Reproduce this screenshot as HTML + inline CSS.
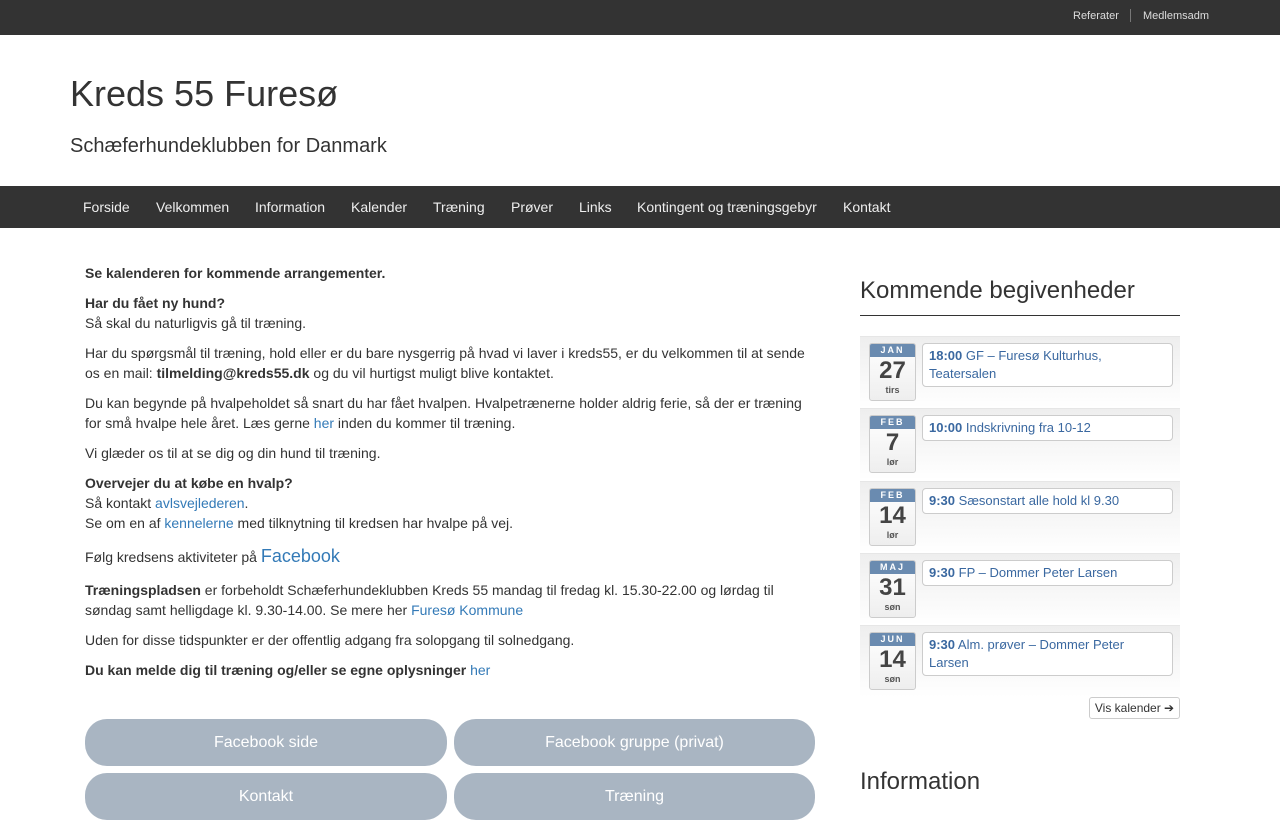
<!DOCTYPE html>
<html><head><meta charset="utf-8"><style>
*{box-sizing:border-box}
body{margin:0;font-family:"Liberation Sans",Arial,sans-serif;color:#333;font-size:14px;line-height:20px;background:#fff;overflow:hidden;height:800px}
a{color:#337ab7;text-decoration:none}
.top{height:35px;background:#333;position:relative}
.top span{position:absolute;top:9px;font-size:11px;color:#ddd;line-height:14px}
.top .sep{position:absolute;left:1130px;top:9px;width:1px;height:13px;background:#777}
h1{position:absolute;left:70px;top:72px;margin:0;font-weight:400;font-size:36px;line-height:44px}
.sub{position:absolute;left:70px;top:134px;font-size:20px;line-height:24px}
.nav{position:absolute;top:186px;left:0;width:1280px;height:42px;background:#333}
.nav span{position:absolute;top:12px;color:#eee;font-size:14px;line-height:18px}
.main{position:absolute;left:85px;top:263px;width:730px}
.main p{margin:0 0 10px}
.btn{position:absolute;background:#a9b5c2;color:#fff;border-radius:22px;font-size:16px;text-align:center;line-height:47px;height:47px;width:362px}
.side h2{position:absolute;left:860px;margin:0;font-weight:400;font-size:24px;line-height:28px}
.row{position:absolute;left:860px;width:320px;height:72px;border-top:1px solid #e6e6e6;background:linear-gradient(#eee,#fff)}
.cal{position:absolute;left:9px;top:6px;width:47px;height:58px;border:1px solid #ccc;border-radius:3px;background:linear-gradient(#fff,#eee);text-align:center;overflow:hidden}
.cal .m{background:#6a8bb0;color:#fff;font-size:9px;line-height:13px;letter-spacing:2px;font-weight:700}
.cal .d{font-size:24px;font-weight:700;line-height:28px;color:#444}
.cal .w{font-size:9px;line-height:11px;font-weight:700;color:#555}
.ev{position:absolute;left:62px;top:6px;width:251px;border:1px solid #ccc;border-radius:4px;background:#fff;padding:3px 6px;font-size:13px;line-height:18px;color:#3a68a0}
.ev b{color:#3a68a0}
</style></head><body>
<div class="top"><span style="left:1073px">Referater</span><div class="sep"></div><span style="left:1143px">Medlemsadm</span></div>
<h1>Kreds 55 Furesø</h1>
<div class="sub">Schæferhundeklubben for Danmark</div>
<div class="nav"><span style="left:83px">Forside</span><span style="left:156px">Velkommen</span><span style="left:255px">Information</span><span style="left:351px">Kalender</span><span style="left:433px">Træning</span><span style="left:511px">Prøver</span><span style="left:579px">Links</span><span style="left:637px">Kontingent og træningsgebyr</span><span style="left:843px">Kontakt</span></div>
<div class="main">
<p><b>Se kalenderen for kommende arrangementer.</b></p>
<p><b>Har du fået ny hund?</b><br>Så skal du naturligvis gå til træning.</p>
<p>Har du spørgsmål til træning, hold eller er du bare nysgerrig på hvad vi laver i kreds55, er du velkommen til at sende os en mail: <b>tilmelding@kreds55.dk</b> og du vil hurtigst muligt blive kontaktet.</p>
<p>Du kan begynde på hvalpeholdet så snart du har fået hvalpen. Hvalpetrænerne holder aldrig ferie, så der er træning for små hvalpe hele året. Læs gerne <a>her</a> inden du kommer til træning.</p>
<p>Vi glæder os til at se dig og din hund til træning.</p>
<p><b>Overvejer du at købe en hvalp?</b><br>Så kontakt <a>avlsvejlederen</a>.<br>Se om en af <a>kennelerne</a> med tilknytning til kredsen har hvalpe på vej.</p>
<p style="margin-top:13px;margin-bottom:13px;line-height:20px">Følg kredsens aktiviteter på <a style="font-size:18px;line-height:20px">Facebook</a></p>
<p><b>Træningspladsen</b> er forbeholdt Schæferhundeklubben Kreds 55 mandag til fredag kl. 15.30-22.00 og lørdag til søndag samt helligdage kl. 9.30-14.00. Se mere her <a>Furesø Kommune</a></p>
<p>Uden for disse tidspunkter er der offentlig adgang fra solopgang til solnedgang.</p>
<p><b>Du kan melde dig til træning og/eller se egne oplysninger</b> <a>her</a></p>
</div>
<div class="btn" style="left:85px;top:719px">Facebook side</div>
<div class="btn" style="left:454px;top:719px;width:361px">Facebook gruppe (privat)</div>
<div class="btn" style="left:85px;top:773px">Kontakt</div>
<div class="btn" style="left:454px;top:773px;width:361px">Træning</div>
<div class="side">
<h2 style="top:277px">Kommende begivenheder</h2>
<div style="position:absolute;left:860px;top:315px;width:320px;height:1px;background:#333"></div>
<div class="row" style="top:336px"><div class="cal"><div class="m">JAN</div><div class="d">27</div><div class="w">tirs</div></div><div class="ev"><b>18:00</b> GF – Furesø Kulturhus, Teatersalen</div></div>
<div class="row" style="top:408px"><div class="cal"><div class="m">FEB</div><div class="d">7</div><div class="w">lør</div></div><div class="ev"><b>10:00</b> Indskrivning fra 10-12</div></div>
<div class="row" style="top:481px"><div class="cal"><div class="m">FEB</div><div class="d">14</div><div class="w">lør</div></div><div class="ev"><b>9:30</b> Sæsonstart alle hold kl 9.30</div></div>
<div class="row" style="top:553px"><div class="cal"><div class="m">MAJ</div><div class="d">31</div><div class="w">søn</div></div><div class="ev"><b>9:30</b> FP – Dommer Peter Larsen</div></div>
<div class="row" style="top:625px"><div class="cal"><div class="m">JUN</div><div class="d">14</div><div class="w">søn</div></div><div class="ev"><b>9:30</b> Alm. prøver – Dommer Peter Larsen</div></div>
<div style="position:absolute;left:1089px;top:697px;width:91px;height:22px;border:1px solid #ccc;border-radius:3px;font-size:12px;line-height:20px;text-align:center;color:#333">Vis kalender ➔</div>
<h2 style="top:768px">Information</h2>
</div>
</body></html>
